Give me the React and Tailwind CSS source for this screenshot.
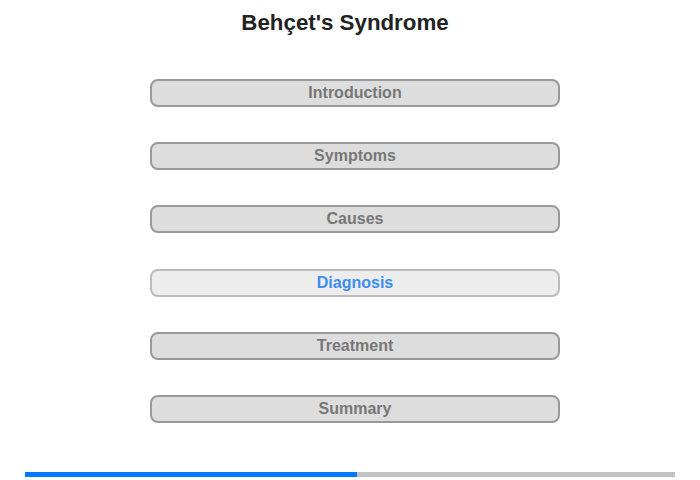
import React from 'react'

const sections = ['Introduction', 'Symptoms', 'Causes', 'Diagnosis', 'Treatment', 'Summary']

const App = () => {
  const active = 'Diagnosis'
  return (
    <div className="w-[700px] h-[480px] bg-white font-['Liberation_Sans',Arial,sans-serif] flex flex-col items-center">
      <h1 className="mt-[10px] text-[22.3px] leading-[26px] font-bold text-[#222] pr-[10px]">Behçet's Syndrome</h1>

      {/* Menu */}
      <div className="mt-[43px] flex flex-col gap-[35.2px] w-[410px] ml-[10px]">
        {sections.map((s) =>
          s === active ? (
            <div
              key={s}
              className="h-[28px] rounded-[8px] border-2 border-[#bbb] bg-[#ededed] flex items-center justify-center text-[16px] font-bold text-[#3b8cf5]"
            >
              {s}
            </div>
          ) : (
            <div
              key={s}
              className="h-[28px] rounded-[8px] border-2 border-[#999] bg-[#dddddd] flex items-center justify-center text-[16px] font-bold text-[#777]"
            >
              {s}
            </div>
          )
        )}
      </div>

      {/* Progress */}
      <div className="mt-auto mb-[3px] w-[650px] h-[5px] bg-[#c3c3c3] flex">
        <div className="w-[332px] h-full bg-[#007bff]" />
      </div>
    </div>
  )
}

export default App
